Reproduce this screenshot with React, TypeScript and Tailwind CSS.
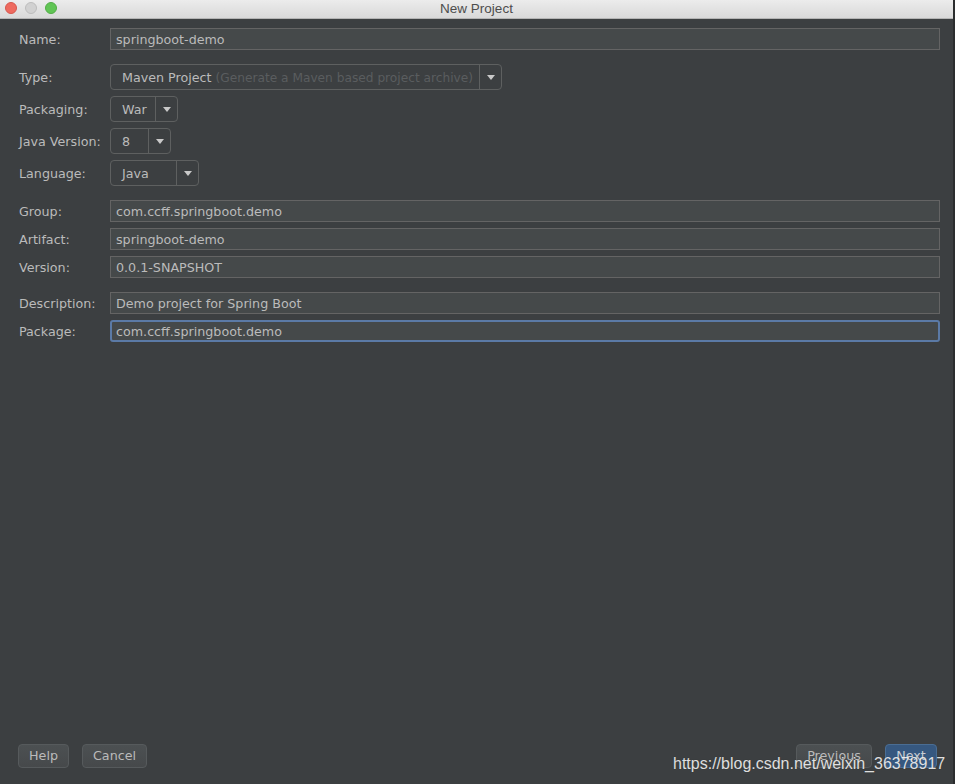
import React from "react";

function Label({ children }: { children: React.ReactNode }) {
  return <div className="w-[91px] shrink-0 pt-[2px] text-[#bbbbbb]">{children}</div>;
}

function TextField({ value, focused }: { value: string; focused?: boolean }) {
  return (
    <div
      className={
        focused
          ? "h-[22px] flex-1 flex items-center bg-[#45494a] border-2 border-[#5b7aa6] rounded-[3px] px-[4px] pt-[2px] text-[#bbbbbb]"
          : "h-[22px] flex-1 flex items-center bg-[#45494a] border border-[#646464] px-[5px] pt-[2px] text-[#bbbbbb]"
      }
    >
      {value}
    </div>
  );
}

function Arrow() {
  return (
    <svg width="8" height="5" viewBox="0 0 8 5">
      <path d="M0 0 L8 0 L4 5 Z" fill="#c9c9c9" />
    </svg>
  );
}

function Combo({ width, children }: { width: string; children: React.ReactNode }) {
  return (
    <div className={`${width} h-[26px] flex border border-[#5e6060] rounded-[4px]`}>
      <div className="flex-1 flex items-center pl-[11px] pt-[2px] text-[#bbbbbb] whitespace-nowrap overflow-hidden">
        {children}
      </div>
      <div className="w-[22px] shrink-0 border-l border-[#5e6060] flex items-center justify-center">
        <Arrow />
      </div>
    </div>
  );
}

function Button({ children, width, primary }: { children: React.ReactNode; width: string; primary?: boolean }) {
  return (
    <div
      className={
        primary
          ? `${width} h-[24px] flex items-center justify-center rounded-[4px] border border-[#4a6d93] bg-[#365880] text-[#c8cdd3]`
          : `${width} h-[24px] flex items-center justify-center rounded-[4px] border border-[#565a5c] bg-gradient-to-b from-[#4c5052] to-[#46494b] text-[#bbbbbb]`
      }
    >
      {children}
    </div>
  );
}

export default function App() {
  return (
    <div className="w-[955px] h-[784px] flex overflow-hidden relative font-['DejaVu_Sans',sans-serif] text-[12.7px]">
      <div className="w-[953px] h-full flex flex-col">
        <div className="h-[19px] shrink-0 relative flex items-center justify-center bg-gradient-to-b from-[#ececec] to-[#d9d9d9] border-b border-[#b4b4b4]">
          <div className="absolute left-[5px] top-[2px] flex gap-[8px]">
            <div className="w-[12px] h-[12px] rounded-full bg-[#ee6a5f] border border-[#d6574d]" />
            <div className="w-[12px] h-[12px] rounded-full bg-[#d1d1d1] border border-[#bdbdbd]" />
            <div className="w-[12px] h-[12px] rounded-full bg-[#61c555] border border-[#52ad46]" />
          </div>
          <span className="font-['Liberation_Sans',sans-serif] text-[13.5px] text-[#4d4d4d] leading-none">New Project</span>
        </div>
        <div className="flex-1 flex flex-col bg-[#3c3f41] pl-[19px] pr-[13px] pt-[9px] pb-[16px]">
          <div className="flex items-center">
            <Label>Name:</Label>
            <TextField value="springboot-demo" />
          </div>

          <div className="flex flex-col gap-[6px] mt-[14px]">
            <div className="flex items-center">
              <Label>Type:</Label>
              <Combo width="w-[392px]">
                <span>Maven Project</span>
                <span className="ml-[4px] text-[12.2px] text-[#5a5d5f]">(Generate a Maven based project archive)</span>
              </Combo>
            </div>
            <div className="flex items-center">
              <Label>Packaging:</Label>
              <Combo width="w-[68px]">War</Combo>
            </div>
            <div className="flex items-center">
              <Label>Java Version:</Label>
              <Combo width="w-[61px]">8</Combo>
            </div>
            <div className="flex items-center">
              <Label>Language:</Label>
              <Combo width="w-[89px]">Java</Combo>
            </div>
          </div>

          <div className="flex flex-col gap-[6px] mt-[14px]">
            <div className="flex items-center">
              <Label>Group:</Label>
              <TextField value="com.ccff.springboot.demo" />
            </div>
            <div className="flex items-center">
              <Label>Artifact:</Label>
              <TextField value="springboot-demo" />
            </div>
            <div className="flex items-center">
              <Label>Version:</Label>
              <TextField value="0.0.1-SNAPSHOT" />
            </div>
          </div>

          <div className="flex flex-col gap-[6px] mt-[14px]">
            <div className="flex items-center">
              <Label>Description:</Label>
              <TextField value="Demo project for Spring Boot" />
            </div>
            <div className="flex items-center">
              <Label>Package:</Label>
              <TextField value="com.ccff.springboot.demo" focused />
            </div>
          </div>

          <div className="flex-1" />

          <div className="flex items-center -ml-[1px]">
            <div className="flex gap-[13px]">
              <Button width="w-[51px]">Help</Button>
              <Button width="w-[65px]">Cancel</Button>
            </div>
            <div className="flex-1" />
            <div className="flex gap-[13px] mr-[3px]">
              <Button width="w-[76px]">Previous</Button>
              <Button width="w-[52px]" primary>Next</Button>
            </div>
          </div>
        </div>
      </div>
      <div className="w-[2px] h-full bg-[#2b2d2e]" />
      <div className="absolute left-[673px] top-[755px] font-['Liberation_Sans',sans-serif] text-[16px] leading-[18px] text-white/85 whitespace-nowrap [text-shadow:0_0_1px_rgba(0,0,0,0.4)]">
        https://blog.csdn.net/weixin_36378917
      </div>
    </div>
  );
}
